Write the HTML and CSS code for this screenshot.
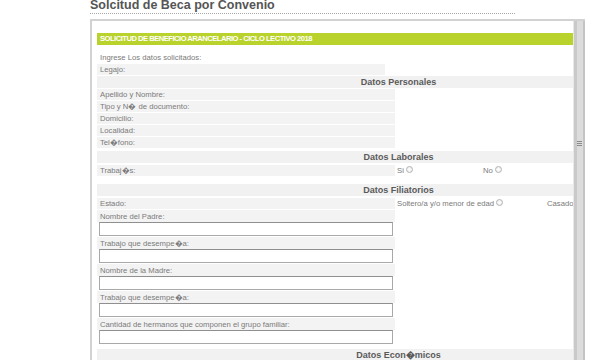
FILE: index.html
```html
<!DOCTYPE html>
<html lang="es">

<head>
    <meta charset="UTF-8">
    <title>Solcitud de Beca por Convenio</title>
    <link rel="stylesheet" href="styles.css">
</head>

<body>
    <div class="page">
        <h2 class="title">Solcitud de Beca por Convenio</h2>

        <div class="frame">
            <div class="viewport">
                <div class="sheet">
                    <div class="bar">SOLICITUD DE BENEFICIO ARANCELARIO - CICLO LECTIVO 2018</div>

                    <div class="intro">Ingrese Los datos solicitados:</div>
                    <div class="row"><div class="lbl short">Legajo:</div></div>

                    <div class="head">Datos Personales</div>
                    <div class="row"><div class="lbl">Apellido y Nombre:</div></div>
                    <div class="row"><div class="lbl">Tipo y N� de documento:</div></div>
                    <div class="row"><div class="lbl">Domicilio:</div></div>
                    <div class="row"><div class="lbl">Localidad:</div></div>
                    <div class="row"><div class="lbl">Tel�fono:</div></div>

                    <div class="head laborales">Datos Laborales</div>
                    <div class="row tall">
                        <div class="lbl">Trabaj�s:</div>
                        <label class="opt">Si <input type="radio" name="trabaja"></label>
                        <label class="opt">No <input type="radio" name="trabaja"></label>
                    </div>

                    <div class="head filiatorios">Datos Filiatorios</div>
                    <div class="row tall">
                        <div class="lbl">Estado:</div>
                        <label class="opt wide">Soltero/a y/o menor de edad <input type="radio" name="estado"></label>
                        <label class="opt">Casado <input type="radio" name="estado"></label>
                    </div>

                    <div class="field">
                        <div class="lbl">Nombre del Padre:</div>
                        <input type="text" class="txt">
                    </div>
                    <div class="field">
                        <div class="lbl">Trabajo que desempe�a:</div>
                        <input type="text" class="txt">
                    </div>
                    <div class="field">
                        <div class="lbl">Nombre de la Madre:</div>
                        <input type="text" class="txt">
                    </div>
                    <div class="field">
                        <div class="lbl">Trabajo que desempe�a:</div>
                        <input type="text" class="txt">
                    </div>
                    <div class="field">
                        <div class="lbl">Cantidad de hermanos que componen el grupo familiar:</div>
                        <input type="text" class="txt">
                    </div>

                    <div class="head economicos">Datos Econ�micos</div>
                </div>
            </div>
            <div class="scrollbar">
                <svg class="grip" width="5" height="6" viewBox="0 0 5 6">
                    <path d="M0 0.5H5M0 2.5H5M0 4.5H5" stroke="#8a8a8a" stroke-width="1" />
                </svg>
            </div>
        </div>
    </div>
</body>

</html>
```

FILE: styles.css
```css
body {
    margin: 0;
    background-color: #fff;
    font-family: 'Liberation Sans', Arial, sans-serif;
    color: #7a7a7a;
    overflow: hidden;
}

.page {
    padding-left: 90px;
}

.title {
    margin: -3px 0 0;
    width: 425px;
    padding-bottom: 0;
    border-bottom: 1px dotted #a8a8a8;
    font-size: 12.5px;
    line-height: 16px;
    font-weight: bold;
    color: #555;
}

/* bordered box with its own scroll bar */
.frame {
    display: flex;
    width: 493px;
    height: 400px;
    margin-top: 5px;
    border-top: 2px solid #d2d2d2;
    border-left: 2px solid #d2d2d2;
}

.viewport {
    flex: 1;
    overflow: hidden;
}

.sheet {
    width: 603px;
    padding: 12px 0 0 5px;
    font-size: 7.7px;
}

.bar {
    height: 12px;
    line-height: 12px;
    padding-left: 3px;
    background-color: #b9d22c;
    color: #fff;
    font-size: 7.6px;
    font-weight: bold;
    letter-spacing: -0.5px;
}

.intro {
    height: 11px;
    line-height: 12px;
    margin-top: 7px;
    padding-left: 3px;
}

.row {
    display: flex;
    align-items: center;
    height: 11px;
    margin-top: 1px;
}

.row.tall {
    height: 12px;
}

.lbl {
    width: 295px;
    height: 11px;
    line-height: 12px;
    padding-left: 3px;
    background-color: #f3f3f3;
    white-space: nowrap;
}

.lbl.short {
    width: 285px;
}

.head {
    height: 12px;
    line-height: 13px;
    margin-top: 1px;
    background-color: #f1f1f1;
    text-align: center;
    font-size: 9px;
    font-weight: bold;
    color: #5a5a5a;
}

.head.laborales {
    margin-top: 3px;
}

.head.filiatorios {
    margin-top: 8px;
}

.head.economicos {
    margin-top: 5px;
}

.opt {
    display: flex;
    align-items: center;
    width: 84px;
    padding-left: 2px;
    white-space: nowrap;
}

.opt.wide {
    width: 148px;
}

.opt input {
    appearance: none;
    width: 7px;
    height: 7px;
    margin: -2px 0 0 2px;
    border: 1px solid #b4b4b4;
    border-radius: 50%;
    background: radial-gradient(circle, #fafafa 30%, #e4e4e4 100%);
}

.field {
    margin-top: 1px;
}

.field .lbl {
    height: 12px;
    line-height: 13px;
}

.txt {
    display: block;
    box-sizing: border-box;
    width: 294px;
    height: 14px;
    margin: 0 0 0 2px;
    padding: 0;
    border: 1px solid #a9a9a9;
    border-top-color: #8f8f8f;
    background-color: #fff;
}

.scrollbar {
    width: 11px;
    border-left: 1px solid #e9e9e9;
    background: linear-gradient(to right, #c9c9c9 0, #c9c9c9 3px, #dcdcdc 3px, #dcdcdc 9px, #c4c4c4 9px);
    display: flex;
    justify-content: center;
    padding-top: 120px;
}

.grip {
    display: block;
}
```
